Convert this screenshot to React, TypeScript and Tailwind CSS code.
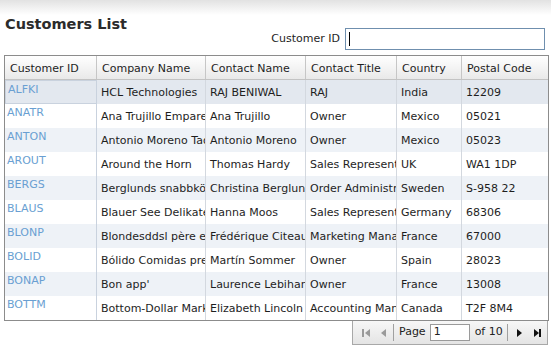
import React from "react";

type Customer = {
  id: string;
  company: string;
  contact: string;
  title: string;
  country: string;
  postal: string;
};

const customers: Customer[] = [
  { id: "ALFKI", company: "HCL Technologies", contact: "RAJ BENIWAL", title: "RAJ", country: "India", postal: "12209" },
  { id: "ANATR", company: "Ana Trujillo Emparedados y helados", contact: "Ana Trujillo", title: "Owner", country: "Mexico", postal: "05021" },
  { id: "ANTON", company: "Antonio Moreno Taquería", contact: "Antonio Moreno", title: "Owner", country: "Mexico", postal: "05023" },
  { id: "AROUT", company: "Around the Horn", contact: "Thomas Hardy", title: "Sales Representative", country: "UK", postal: "WA1 1DP" },
  { id: "BERGS", company: "Berglunds snabbköp", contact: "Christina Berglund", title: "Order Administrator", country: "Sweden", postal: "S-958 22" },
  { id: "BLAUS", company: "Blauer See Delikatessen", contact: "Hanna Moos", title: "Sales Representative", country: "Germany", postal: "68306" },
  { id: "BLONP", company: "Blondesddsl père et fils", contact: "Frédérique Citeaux", title: "Marketing Manager", country: "France", postal: "67000" },
  { id: "BOLID", company: "Bólido Comidas preparadas", contact: "Martín Sommer", title: "Owner", country: "Spain", postal: "28023" },
  { id: "BONAP", company: "Bon app'", contact: "Laurence Lebihan", title: "Owner", country: "France", postal: "13008" },
  { id: "BOTTM", company: "Bottom-Dollar Markets", contact: "Elizabeth Lincoln", title: "Accounting Manager", country: "Canada", postal: "T2F 8M4" },
];

const cols = ["w-[92px]", "w-[109px]", "w-[100px]", "w-[91px]", "w-[65px]", "w-[86px]"];
const headers = ["Customer ID", "Company Name", "Contact Name", "Contact Title", "Country", "Postal Code"];

function rowBg(i: number) {
  if (i === 0) return "bg-[#e3e8ef]";
  return i % 2 === 0 ? "bg-[#eef2f7]" : "bg-white";
}

export default function App() {
  return (
    <div className="w-[551px] h-[346px] overflow-hidden bg-[linear-gradient(to_bottom,#e2e2e2_0px,#ffffff_15px)] font-['DejaVu_Sans',sans-serif] text-[11px] text-[#1e1e1e]">
      <div className="flex justify-between items-start pl-[5px] pr-[6px] pt-[14px] h-[55px]">
        <h1 className="text-[14.5px] font-bold text-[#2b2b2b] leading-[20px]">Customers List</h1>
        <div className="flex items-center gap-[5px] pt-[14px]">
          <span className="pt-[1px]">Customer ID</span>
          <div className="w-[200px] h-[22px] border border-[#6f8fae] bg-white flex items-center pl-[3px]">
            <div className="w-px h-[14px] bg-black" />
          </div>
        </div>
      </div>

      <div className="ml-[4px] w-[545px] border border-[#8c8c8c] bg-white">
        <div className="flex h-[24px] border-b border-[#c3c3c3] bg-[linear-gradient(to_bottom,#ffffff,#e9e9e9)]">
          {headers.map((h, c) => (
            <div
              key={h}
              className={`${cols[c]} shrink-0 flex items-center pl-[5px] pt-[3px] overflow-hidden whitespace-nowrap ${c < 5 ? "border-r border-[#c6c6c6]" : ""}`}
            >
              {h}
            </div>
          ))}
        </div>
        {customers.map((cu, i) => {
          const vals = [cu.company, cu.contact, cu.title, cu.country, cu.postal];
          return (
            <div key={cu.id} className={`flex h-[24px] ${rowBg(i)}`}>
              <div
                className={`${cols[0]} shrink-0 border-r border-[#c9d2de] pl-[2px] pt-[1px] text-[#6a9fd2] ${i === 0 ? "border border-[#9cc3dd] border-r-[#c9d2de]" : ""}`}
              >
                {cu.id}
              </div>
              {vals.map((v, c) => (
                <div
                  key={c}
                  className={`${cols[c + 1]} shrink-0 flex items-center pl-[4px] pt-[3px] overflow-hidden whitespace-nowrap text-clip ${c < 4 ? "border-r border-[#d3d8df]" : ""}`}
                >
                  {v}
                </div>
              ))}
            </div>
          );
        })}
      </div>

      <div className="flex justify-end pr-[3px]">
        <div className="flex items-center h-[24px] w-[196px] border border-t-0 border-[#a8a8a8] bg-[linear-gradient(to_bottom,#f7f7f7,#e4e4e4)] text-[#222] pl-[6px]">
          <svg width="14" height="10" viewBox="0 0 14 10" className="ml-[1px]">
            <rect x="2" y="1" width="2" height="8" fill="#9a9a9a" />
            <path d="M10 1 L5 5 L10 9 Z" fill="#9a9a9a" />
          </svg>
          <svg width="10" height="10" viewBox="0 0 10 10" className="ml-[5px]">
            <path d="M7 1 L2 5 L7 9 Z" fill="#9a9a9a" />
          </svg>
          <div className="w-px h-[17px] bg-[#a0a0a0] ml-[4px]" />
          <span className="ml-[5px]">Page</span>
          <div className="ml-[4px] w-[40px] h-[17px] border border-[#9a9a9a] bg-white flex items-center pl-[3px]">1</div>
          <span className="ml-[5px]">of 10</span>
          <div className="w-px h-[17px] bg-[#a0a0a0] ml-[4px]" />
          <svg width="10" height="10" viewBox="0 0 10 10" className="ml-[6px]">
            <path d="M3 1 L8 5 L3 9 Z" fill="#111" />
          </svg>
          <svg width="14" height="10" viewBox="0 0 14 10" className="ml-[6px]">
            <path d="M4 1 L9 5 L4 9 Z" fill="#111" />
            <rect x="9" y="1" width="2" height="8" fill="#111" />
          </svg>
        </div>
      </div>
    </div>
  );
}
